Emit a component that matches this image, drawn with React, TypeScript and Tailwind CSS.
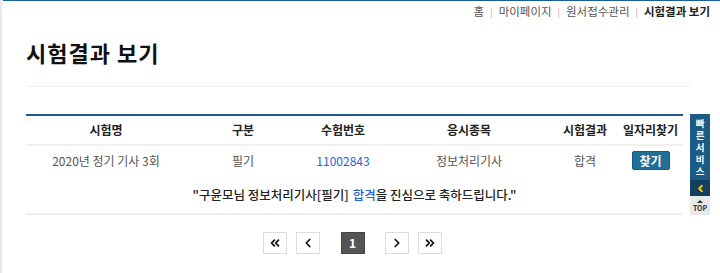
import { ChevronsLeft, ChevronLeft, ChevronRight, ChevronsRight } from "lucide-react";

const font = { fontFamily: '"Noto Sans CJK KR", "Noto Sans", sans-serif' };

const cols = [
  { label: "시험명", w: "w-[160px]" },
  { label: "구분", w: "w-[114px]" },
  { label: "수험번호", w: "w-[86px]" },
  { label: "응시종목", w: "w-[166px]" },
  { label: "시험결과", w: "w-[66px]" },
  { label: "일자리찾기", w: "w-[65px]" },
];

const PageBtn = ({ children, active }: { children: React.ReactNode; active?: boolean }) => (
  <button
    className={
      active
        ? "w-6 h-[22px] flex items-center justify-center bg-[#555] border border-[#444] text-white text-[12px] font-bold"
        : "w-6 h-[22px] flex items-center justify-center bg-white border border-[#ddd] text-[#111]"
    }
  >
    {children}
  </button>
);

const App = () => {
  return (
    <div className="relative w-[720px] h-[273px] bg-white overflow-hidden" style={font}>
      <div className="h-px bg-[#1a5f94]"></div>
      <div className="absolute left-0 top-0 bottom-0 w-[3px] bg-gradient-to-r from-[#e4e4e4] to-[#f8f8f8]"></div>

      <div className="flex justify-end items-center pr-[10px] pt-[6px] h-[16px] text-[11.5px] text-[#555] gap-[6px] leading-none">
        <span>홈</span>
        <span className="text-[#aaa] text-[9px]">|</span>
        <span>마이페이지</span>
        <span className="text-[#aaa] text-[9px]">|</span>
        <span>원서접수관리</span>
        <span className="text-[#aaa] text-[9px]">|</span>
        <span className="font-bold text-[#222]">시험결과 보기</span>
      </div>

      <div className="ml-[26px] w-[664px]">
        <h2 className="mt-[21px] text-[22px] font-bold text-[#111] leading-[28px] tracking-[1px]">시험결과 보기</h2>
        <div className="mt-[20px] h-px bg-[#eee]"></div>
      </div>

      <div className="ml-[26px] mt-[27px] w-[657px] border-t-2 border-[#1f5a8e] text-[12px]">
        <div className="flex h-[30px] items-center border-b-2 border-[#f0f0f0] font-bold text-[#222]">
          {cols.map((c) => (
            <div key={c.label} className={`${c.w} text-center`}>
              {c.label}
            </div>
          ))}
        </div>
        <div className="flex h-[29px] items-center text-[#555]">
          <div className="w-[160px] text-center">2020년 정기 기사 3회</div>
          <div className="w-[114px] text-center">필기</div>
          <div className="w-[86px] text-center text-[#2463d6]">11002843</div>
          <div className="w-[166px] text-center">정보처리기사</div>
          <div className="w-[66px] text-center">합격</div>
          <div className="w-[65px] flex justify-center">
            <button className="w-[38px] h-[19px] rounded-[2px] bg-[#1f6f96] border border-[#15587a] text-white font-bold text-[12px] leading-none">
              찾기
            </button>
          </div>
        </div>
        <div className="flex h-[40px] items-center justify-center border-b-2 border-[#eee] text-[#222] font-medium pt-[3px] text-[12.5px]">
          "구윤모님 정보처리기사[필기] <span className="text-[#2463d6] ml-[4px]">합격</span>을 진심으로 축하드립니다."
        </div>
      </div>

      <div className="flex justify-center mt-[17px] ml-[-16px]">
        <div className="flex items-center">
          <PageBtn>
            <ChevronsLeft size={14} strokeWidth={3} />
          </PageBtn>
          <div className="w-[9px]"></div>
          <PageBtn>
            <ChevronLeft size={14} strokeWidth={3} />
          </PageBtn>
          <div className="w-[21px]"></div>
          <PageBtn active>1</PageBtn>
          <div className="w-[20px]"></div>
          <PageBtn>
            <ChevronRight size={14} strokeWidth={3} />
          </PageBtn>
          <div className="w-[9px]"></div>
          <PageBtn>
            <ChevronsRight size={14} strokeWidth={3} />
          </PageBtn>
        </div>
      </div>

      <div className="absolute left-[690px] top-[114px] w-[20px] flex flex-col">
        <div className="h-[66px] bg-[#1b5b85] flex justify-center pt-[5px]">
          <span className="[writing-mode:vertical-rl] text-white text-[9.5px] font-bold tracking-[2.5px] leading-[20px]">
            빠른서비스
          </span>
        </div>
        <div className="h-[16px] bg-[#123f5e] flex items-center justify-center text-[#f5d000]">
          <ChevronLeft size={11} strokeWidth={4} />
        </div>
        <div className="h-[19px] bg-[#e8e8e8] flex flex-col items-center justify-center gap-[2px]">
          <div className="w-0 h-0 border-l-[3px] border-r-[3px] border-b-[3px] border-l-transparent border-r-transparent border-b-[#333]"></div>
          <span className="text-[#333] text-[7px] font-bold leading-[7px]">TOP</span>
        </div>
      </div>
    </div>
  );
};

export default App;
